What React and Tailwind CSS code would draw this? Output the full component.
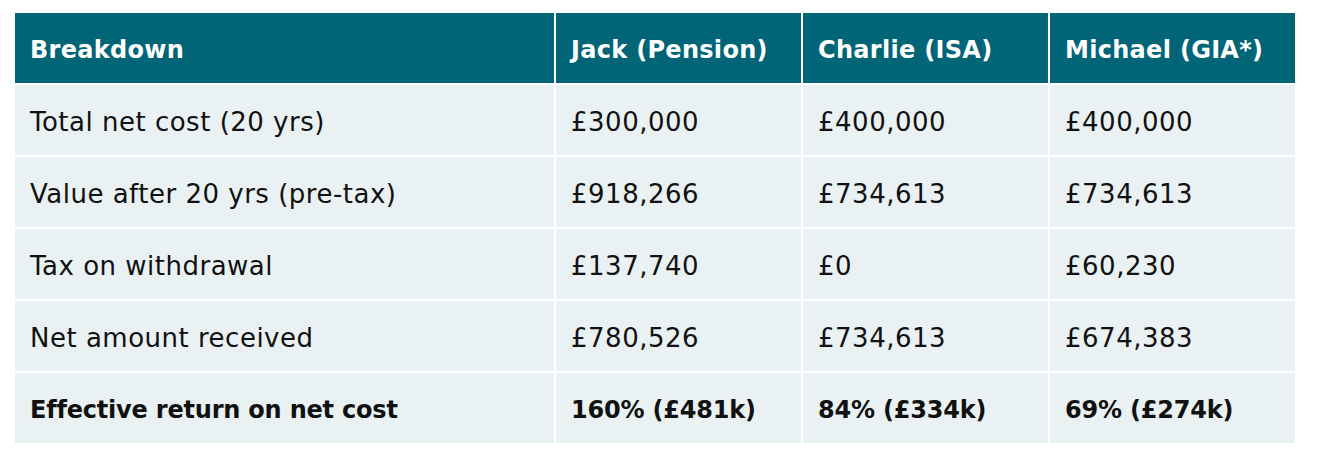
import React from "react";

const rows = [
  ["Total net cost (20 yrs)", "£300,000", "£400,000", "£400,000"],
  ["Value after 20 yrs (pre-tax)", "£918,266", "£734,613", "£734,613"],
  ["Tax on withdrawal", "£137,740", "£0", "£60,230"],
  ["Net amount received", "£780,526", "£734,613", "£674,383"],
];

const last = ["Effective return on net cost", "160% (£481k)", "84% (£334k)", "69% (£274k)"];

function App() {
  return (
    <div className="bg-white w-[1317px] h-[458px] pt-[13px] pl-[15px] font-['DejaVu_Sans',sans-serif]">
      <div className="grid grid-cols-[539px_245px_245px_245px] gap-[2px] w-[1280px]">
        {["Breakdown", "Jack (Pension)", "Charlie (ISA)", "Michael (GIA*)"].map((h) => (
          <div key={h} className="bg-[#006577] h-[70px] flex items-center pt-[4px] px-[15px] text-white font-bold text-[24px] tracking-[0.3px]">
            {h}
          </div>
        ))}
        {rows.map((r) =>
          r.map((c, i) => (
            <div key={r[0] + i} className="bg-[#e9f1f3] h-[70px] flex items-center pt-[5px] px-[15px] text-[#111] text-[26px] tracking-[0.5px]">
              {c}
            </div>
          ))
        )}
        {last.map((c) => (
          <div key={c} className="bg-[#e9f1f3] h-[70px] flex items-center pt-[4px] px-[15px] text-[#111] font-bold text-[24px] tracking-[-0.2px]">
            {c}
          </div>
        ))}
      </div>
    </div>
  );
}

export default App;
